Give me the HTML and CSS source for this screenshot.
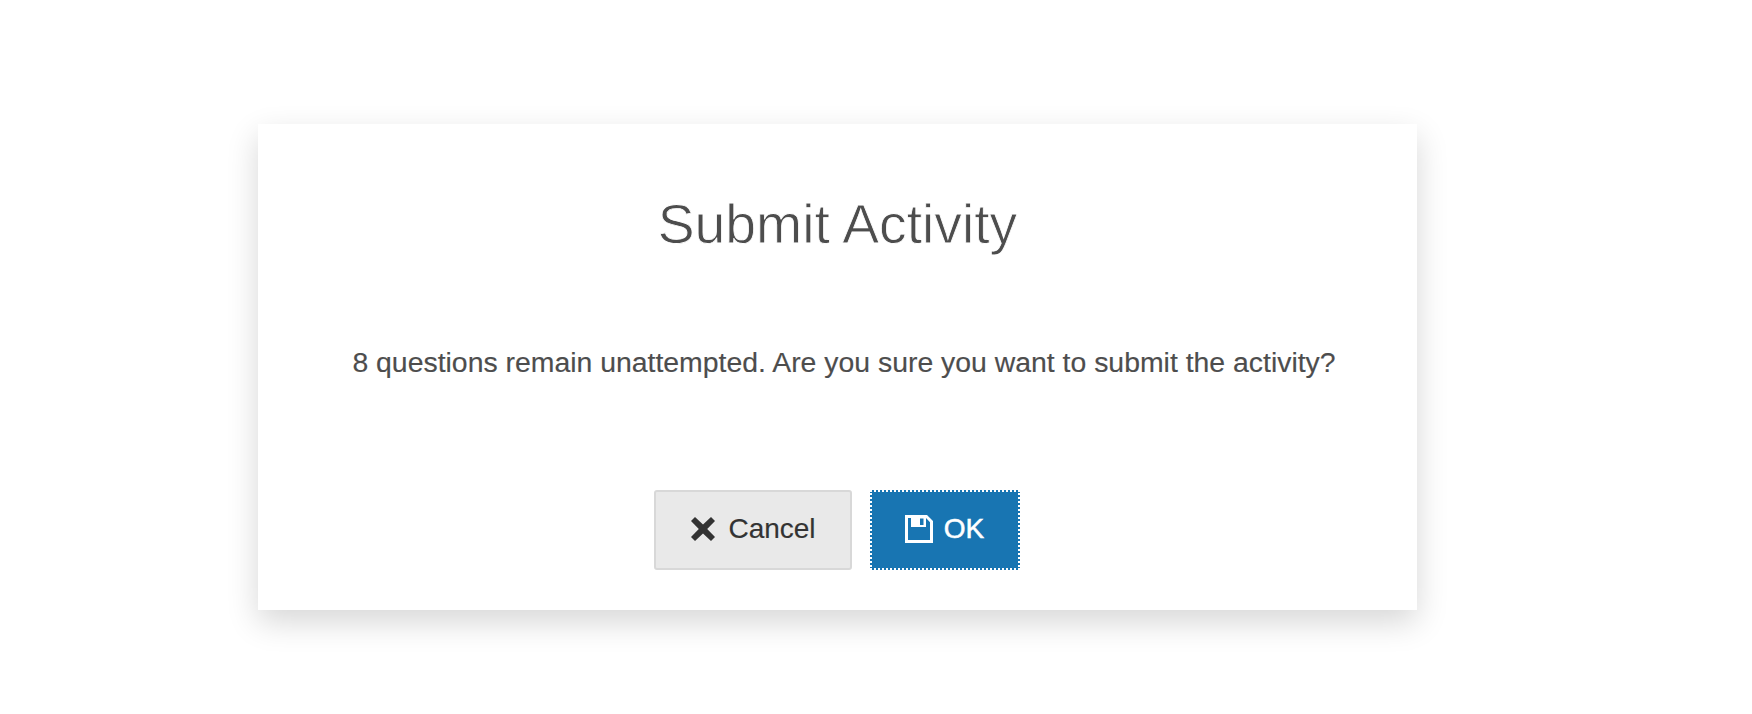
FILE: index.html
```html
<!DOCTYPE html>
<html lang="en">
<head>
<meta charset="utf-8">
<title>Submit Activity</title>
<link rel="stylesheet" href="styles.css">
</head>
<body>
<div class="modal">
  <h1 class="title">Submit Activity</h1>
  <p class="message">8 questions remain unattempted. Are you sure you want to submit the activity?</p>
  <div class="actions">
    <button class="btn btn-cancel" type="button">
      <svg class="icon-x" viewBox="0 0 24 24" aria-hidden="true"><path d="M4 0 L12 7.6 L20 0 L24 4 L16.2 12 L24 20 L20 24 L12 16.4 L4 24 L0 20 L7.8 12 L0 4 Z"/></svg>
      <span>Cancel</span>
    </button>
    <button class="btn btn-ok" type="button">
      <svg class="icon-save" viewBox="0 0 28 28" aria-hidden="true"><path fill-rule="evenodd" d="M0 0 H22 L28 6 V28 H0 Z M3 3 V25 H25 V7.2 L21 3 V12 H6 V3 Z M15 3.5 V10 H18.5 V3.5 Z"/></svg>
      <span>OK</span>
    </button>
  </div>
</div>
</body>
</html>
```

FILE: styles.css
```css
* { box-sizing: border-box; }
html, body { height: 100%; }
body {
  margin: 0;
  background: #fff;
  font-family: "Liberation Sans", Arial, sans-serif;
  color: #4d4d4d;
  padding: 124px 0 0 258px;
}
.modal {
  width: 1159px;
  height: 486px;
  background: #fff;
  box-shadow: 0 12px 30px rgba(0, 0, 0, 0.16);
  padding: 65px 0 0;
  display: flex;
  flex-direction: column;
  align-items: center;
}
.title {
  margin: 0;
  font-family: "Liberation Sans", Arial, sans-serif;
  font-weight: 400;
  font-size: 55.3px;
  line-height: 70px;
  color: #4d4d4d;
  -webkit-text-stroke: 0.8px #fff;
}
.message {
  margin: 83px 0 0 13px;
  font-size: 28.4px;
  line-height: 40px;
  -webkit-text-stroke: 0.15px #4d4d4d;
}
.actions {
  margin-top: 108px;
  margin-right: 2px;
  display: flex;
  gap: 18px;
}
.btn {
  height: 80px;
  display: flex;
  align-items: center;
  justify-content: center;
  font-family: "Liberation Sans", Arial, sans-serif;
  font-size: 28px;
  border-radius: 3px;
  padding: 0 0 2px;
}
.btn-cancel {
  width: 198px;
  gap: 13px;
  padding-left: 2px;
  background: #e9e9e9;
  border: 2px solid #d8d8d8;
  color: #333;
  -webkit-text-stroke: 0.15px #333;
}
.btn-ok {
  width: 150px;
  gap: 11px;
  background: #1875b2;
  border: 2px dotted #fff;
  border-radius: 0;
  color: #fff;
  -webkit-text-stroke: 0.5px #fff;
}
.icon-x { width: 24px; height: 24px; fill: #333; }
.icon-save { width: 28px; height: 28px; fill: #fff; }
```
